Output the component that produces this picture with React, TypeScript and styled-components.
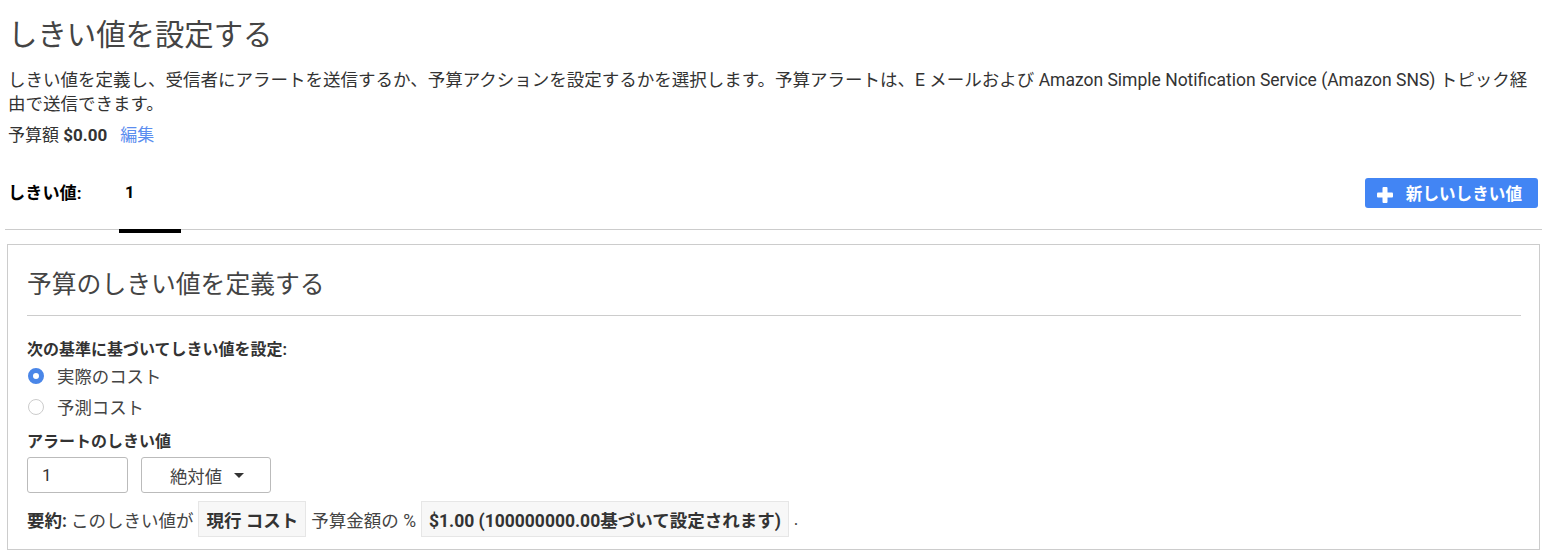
import { useState } from 'react';
import styled, { createGlobalStyle } from 'styled-components';

const GlobalStyle = createGlobalStyle`
  body {
    margin: 0;
    background: #fff;
    font-family: Roboto, "Noto Sans CJK JP", sans-serif;
    color: #333;
  }
`;

const Page = styled.div`
  padding: 0 8px;
  width: 1532px;
`;

const Title = styled.h1`
  margin: 15px 0 0;
  font-size: 29.4px;
  line-height: 40px;
  font-weight: 400;
  color: #444;
`;

const Description = styled.p`
  margin: 13px 0 0;
  font-size: 17.5px;
  line-height: 24px;
  color: #333;
`;

const BudgetLine = styled.div`
  margin-top: 7px;
  font-size: 17px;
  line-height: 24px;
  color: #333;

  > strong {
    font-weight: 700;
  }
`;

const EditLink = styled.a`
  margin-left: 13px;
  color: #5b8def;
  text-decoration: none;
  cursor: pointer;
`;

const TabBar = styled.div`
  display: flex;
  margin: 0 -2px 0 -3px;
  padding: 31px 2px 0 3px;
  border-bottom: 1px solid #ccc;
`;

const TabLabel = styled.div`
  width: 111px;
  font-size: 17.2px;
  font-weight: 700;
  line-height: 30px;
  padding-bottom: 21px;
  color: #000;
`;

const Tab = styled.div<{ $active?: boolean }>`
  position: relative;
  width: 62px;
  padding: 0 0 21px 6px;
  box-sizing: border-box;
  font-size: 16.5px;
  font-weight: 700;
  line-height: 30px;
  color: #000;

  &::after {
    content: '';
    display: ${(p) => (p.$active ? 'block' : 'none')};
    position: absolute;
    left: 0;
    right: 0;
    bottom: -4px;
    height: 4px;
    background: #000;
  }
`;

const PrimaryButton = styled.button`
  margin-left: auto;
  margin-right: 2px;
  height: 30px;
  padding: 0 16px 0 12px;
  display: flex;
  align-items: center;
  gap: 13px;
  border: none;
  border-radius: 3px;
  background: #4285f4;
  color: #fff;
  font-family: inherit;
  font-size: 16.6px;
  font-weight: 700;
  cursor: pointer;

  > svg {
    margin-top: 3px;
  }
`;

const Panel = styled.section`
  margin: 14px 0 0 -1px;
  border: 1px solid #ccc;
  padding: 0 18px 12px 19px;
`;

const PanelHeading = styled.h2`
  margin: 0;
  padding: 20px 0 10px;
  font-size: 24.8px;
  line-height: 40px;
  font-weight: 400;
  color: #444;
  border-bottom: 1px solid #ccc;
`;

const FieldLabel = styled.div<{ $gap: number }>`
  margin-top: ${(p) => p.$gap}px;
  font-size: 16px;
  line-height: 20px;
  font-weight: 700;
  color: #333;
`;

const RadioRow = styled.label`
  display: flex;
  align-items: center;
  height: 31px;
  gap: 13px;
  font-size: 17.4px;
  color: #444;
  cursor: pointer;
`;

const RadioDot = styled.span<{ $checked: boolean }>`
  width: 16px;
  height: 16px;
  box-sizing: border-box;
  border-radius: 50%;
  margin-left: 1px;
  border: ${(p) => (p.$checked ? '5px solid #4a86e8' : '1px solid #ccc')};
  background: #fff;
`;

const InputRow = styled.div`
  display: flex;
  gap: 13px;
  margin-top: 5px;
`;

const NumberInput = styled.input`
  width: 101px;
  height: 36px;
  box-sizing: border-box;
  padding: 0 14px;
  border: 1px solid #bbb;
  border-radius: 3px;
  font-family: inherit;
  font-size: 17px;
  color: #333;
  outline: none;
`;

const SelectButton = styled.button`
  width: 130px;
  height: 36px;
  display: flex;
  align-items: center;
  justify-content: center;
  gap: 12px;
  padding: 0 0 0 2px;
  border: 1px solid #bbb;
  border-radius: 3px;
  background: #fff;
  font-family: inherit;
  font-size: 17.4px;
  color: #444;
  cursor: pointer;
`;

const Caret = styled.span`
  width: 0;
  height: 0;
  border-left: 5px solid transparent;
  border-right: 5px solid transparent;
  border-top: 5px solid #333;
`;

const Summary = styled.div`
  display: flex;
  align-items: center;
  margin-top: 8px;
  font-size: 17.5px;
  color: #444;
  white-space: nowrap;

  > strong {
    color: #333;
    margin-right: 4px;
  }
`;

const Chip = styled.span`
  height: 36px;
  box-sizing: border-box;
  display: inline-flex;
  align-items: center;
  padding: 0 7px;
  margin: 0 5px;
  background: #f7f7f7;
  border: 1px solid #e6e6e6;
  font-weight: 700;
  color: #333;
`;

const PlusIcon = () => (
  <svg width="16" height="16" viewBox="0 0 16 16">
    <rect x="5.5" y="0" width="5" height="16" rx="1" fill="#fff" />
    <rect x="0" y="5.5" width="16" height="5" rx="1" fill="#fff" />
  </svg>
);

export default function App() {
  const [basis, setBasis] = useState<'actual' | 'forecast'>('actual');
  const [amount, setAmount] = useState('1');

  return (
    <>
      <GlobalStyle />
      <Page>
        <Title>しきい値を設定する</Title>
        <Description>
          しきい値を定義し、受信者にアラートを送信するか、予算アクションを設定するかを選択します。予算アラートは、E
          メールおよび Amazon Simple Notification Service (Amazon SNS) トピック経由で送信できます。
        </Description>
        <BudgetLine>
          予算額 <strong>$0.00</strong>
          <EditLink>編集</EditLink>
        </BudgetLine>

        <TabBar>
          <TabLabel>しきい値:</TabLabel>
          <Tab $active>1</Tab>
          <PrimaryButton>
            <PlusIcon />
            新しいしきい値
          </PrimaryButton>
        </TabBar>

        <Panel>
          <PanelHeading>予算のしきい値を定義する</PanelHeading>
          <FieldLabel $gap={24}>次の基準に基づいてしきい値を設定:</FieldLabel>
          <RadioRow onClick={() => setBasis('actual')}>
            <RadioDot $checked={basis === 'actual'} />
            実際のコスト
          </RadioRow>
          <RadioRow onClick={() => setBasis('forecast')}>
            <RadioDot $checked={basis === 'forecast'} />
            予測コスト
          </RadioRow>

          <FieldLabel $gap={10}>アラートのしきい値</FieldLabel>
          <InputRow>
            <NumberInput value={amount} onChange={(e) => setAmount(e.target.value)} />
            <SelectButton>
              絶対値
              <Caret />
            </SelectButton>
          </InputRow>

          <Summary>
            <strong>要約:</strong>
            このしきい値が
            <Chip>現行 コスト</Chip>
            予算金額の %
            <Chip>$1.00 (100000000.00基づいて設定されます)</Chip>.
          </Summary>
        </Panel>
      </Page>
    </>
  );
}
